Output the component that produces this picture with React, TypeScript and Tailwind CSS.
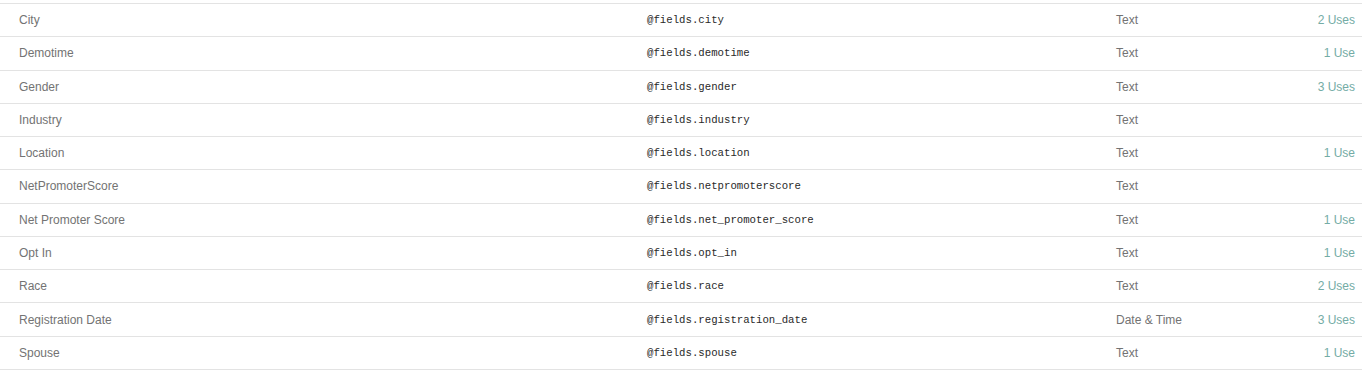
const fields = [
  { name: "City", key: "@fields.city", type: "Text", uses: "2 Uses" },
  { name: "Demotime", key: "@fields.demotime", type: "Text", uses: "1 Use" },
  { name: "Gender", key: "@fields.gender", type: "Text", uses: "3 Uses" },
  { name: "Industry", key: "@fields.industry", type: "Text", uses: "" },
  { name: "Location", key: "@fields.location", type: "Text", uses: "1 Use" },
  { name: "NetPromoterScore", key: "@fields.netpromoterscore", type: "Text", uses: "" },
  { name: "Net Promoter Score", key: "@fields.net_promoter_score", type: "Text", uses: "1 Use" },
  { name: "Opt In", key: "@fields.opt_in", type: "Text", uses: "1 Use" },
  { name: "Race", key: "@fields.race", type: "Text", uses: "2 Uses" },
  { name: "Registration Date", key: "@fields.registration_date", type: "Date & Time", uses: "3 Uses" },
  { name: "Spouse", key: "@fields.spouse", type: "Text", uses: "1 Use" },
]

export default function App() {
  return (
    <div className="bg-white w-[1367px] h-[374px] pt-[3px] pr-[5px] overflow-hidden">
      <div className="border-t border-[#e3e3e3]">
        {fields.map((f) => (
          <div
            key={f.key}
            className="grid grid-cols-[647px_469px_1fr_auto] items-center h-[33.27px] border-b border-[#e3e3e3] pr-[7px] text-[12px] font-['Liberation_Sans',sans-serif]"
          >
            <div className="pl-[19px] text-[#737373]">{f.name}</div>
            <div className="font-['Liberation_Mono',monospace] text-[10.7px] text-[#2a2a2a]">{f.key}</div>
            <div className="text-[#737373]">{f.type}</div>
            <div className="text-right text-[#74aca5]">{f.uses}</div>
          </div>
        ))}
      </div>
    </div>
  )
}
